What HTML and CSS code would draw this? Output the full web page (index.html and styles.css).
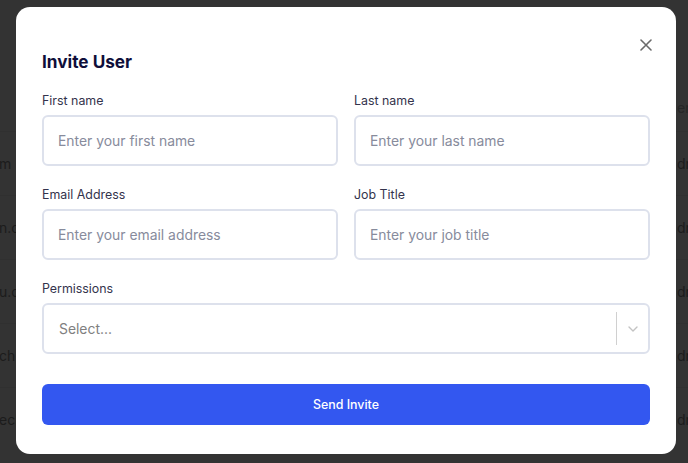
FILE: index.html
```html
<!DOCTYPE html>
<html lang="en">
<head>
<meta charset="utf-8">
<title>Invite User</title>
<link rel="stylesheet" href="styles.css">
</head>
<body>
<div class="bg-table">
  <div class="bg-top"></div>
  <div class="bg-head"><span class="bg-l"></span><span class="bg-r head">er</span></div>
  <div class="bg-row"><span class="bg-l">m</span><span class="bg-r">dr</span></div>
  <div class="bg-row"><span class="bg-l">n.com</span><span class="bg-r">dr</span></div>
  <div class="bg-row"><span class="bg-l">u.com</span><span class="bg-r">dr</span></div>
  <div class="bg-row"><span class="bg-l">ch.io</span><span class="bg-r">dr</span></div>
  <div class="bg-row"><span class="bg-l">ech.com</span><span class="bg-r">dr</span></div>
</div>

<div class="overlay">
  <div class="modal">
    <button class="close" type="button" aria-label="Close">
      <svg width="12" height="12" viewBox="0 0 12 12"><path d="M1 1L11 11M11 1L1 11" stroke="#6b6b6b" stroke-width="1.6" stroke-linecap="round"/></svg>
    </button>
    <h2 class="title">Invite User</h2>
    <form class="form">
      <div class="grid">
        <label class="field">
          <span class="label">First name</span>
          <input class="input" type="text" placeholder="Enter your first name">
        </label>
        <label class="field">
          <span class="label">Last name</span>
          <input class="input" type="text" placeholder="Enter your last name">
        </label>
        <label class="field">
          <span class="label">Email Address</span>
          <input class="input" type="text" placeholder="Enter your email address">
        </label>
        <label class="field">
          <span class="label">Job Title</span>
          <input class="input" type="text" placeholder="Enter your job title">
        </label>
        <div class="field wide">
          <span class="label">Permissions</span>
          <div class="select">
            <span class="select-value">Select...</span>
            <span class="select-sep"></span>
            <span class="select-ind">
              <svg width="10" height="6" viewBox="0 0 10 6"><path d="M1 1L5 5L9 1" fill="none" stroke="#c3c3c3" stroke-width="1.4" stroke-linecap="round" stroke-linejoin="round"/></svg>
            </span>
          </div>
        </div>
      </div>
      <button class="submit" type="button">Send Invite</button>
    </form>
  </div>
</div>
</body>
</html>
```

FILE: styles.css
```css
* { box-sizing: border-box; }

html, body {
  margin: 0;
  padding: 0;
  width: 688px;
  height: 463px;
  overflow: hidden;
  background: #333333;
  font-family: Inter, "Noto Sans", "Liberation Sans", sans-serif;
}

/* dimmed page behind the modal */
.bg-table {
  display: flex;
  flex-direction: column;
  width: 688px;
  color: #1c1c1c;
  font-size: 14px;
}
.bg-top { height: 83px; }
.bg-head {
  height: 48px;
  display: flex;
  justify-content: space-between;
  align-items: center;
}
.bg-row {
  height: 64px;
  display: flex;
  justify-content: space-between;
  align-items: center;
  border-top: 1px solid #303030;
}
.bg-l {
  width: 40px;
  overflow: hidden;
  white-space: nowrap;
  margin-left: -1px;
}
.bg-r {
  width: 11px;
  overflow: hidden;
  white-space: nowrap;
}
.bg-r.head { color: #262626; }

.overlay {
  position: fixed;
  inset: 0;
  display: flex;
  align-items: flex-start;
  padding: 7px 0 0 16px;
}

.modal {
  position: relative;
  width: 660px;
  background: #ffffff;
  border-radius: 14px;
  padding: 43px 26px 29px;
}

.close {
  position: absolute;
  top: 32px;
  right: 24px;
  width: 12px;
  height: 12px;
  padding: 0;
  border: 0;
  background: none;
  display: flex;
  cursor: pointer;
}

.title {
  margin: 0 0 19px;
  font-size: 17.2px;
  line-height: 24px;
  font-weight: 700;
  color: #0f0e3a;
}

.grid {
  display: grid;
  grid-template-columns: 1fr 1fr;
  column-gap: 16px;
  row-gap: 21px;
}

.field {
  display: flex;
  flex-direction: column;
  gap: 6px;
}
.field.wide { grid-column: 1 / 3; }

.label {
  font-size: 12.4px;
  line-height: 16px;
  color: #33334c;
}

.input {
  height: 51px;
  width: 100%;
  border: 2px solid #dde1ec;
  border-radius: 6px;
  padding: 0 14px;
  font-family: Inter, "Noto Sans", "Liberation Sans", sans-serif;
  font-size: 13.9px;
  color: #222;
  background: #fff;
  outline: none;
}
.input::placeholder { color: #878b9c; }

.select {
  height: 51px;
  border: 2px solid #dde1ec;
  border-radius: 6px;
  display: flex;
  align-items: center;
  padding-left: 15px;
}
.select-value {
  flex: 1;
  font-size: 13.9px;
  color: #808080;
}
.select-sep {
  width: 1px;
  align-self: stretch;
  margin: 7px 0;
  background: #d0d0d0;
}
.select-ind {
  width: 31px;
  display: flex;
  justify-content: center;
  align-items: center;
}

.submit {
  margin-top: 30px;
  width: 100%;
  height: 41px;
  border: 0;
  border-radius: 6px;
  background: #3357f0;
  color: #ffffff;
  font-family: Inter, "Noto Sans", "Liberation Sans", sans-serif;
  font-size: 12.4px;
  font-weight: 500;
  cursor: pointer;
}
```
